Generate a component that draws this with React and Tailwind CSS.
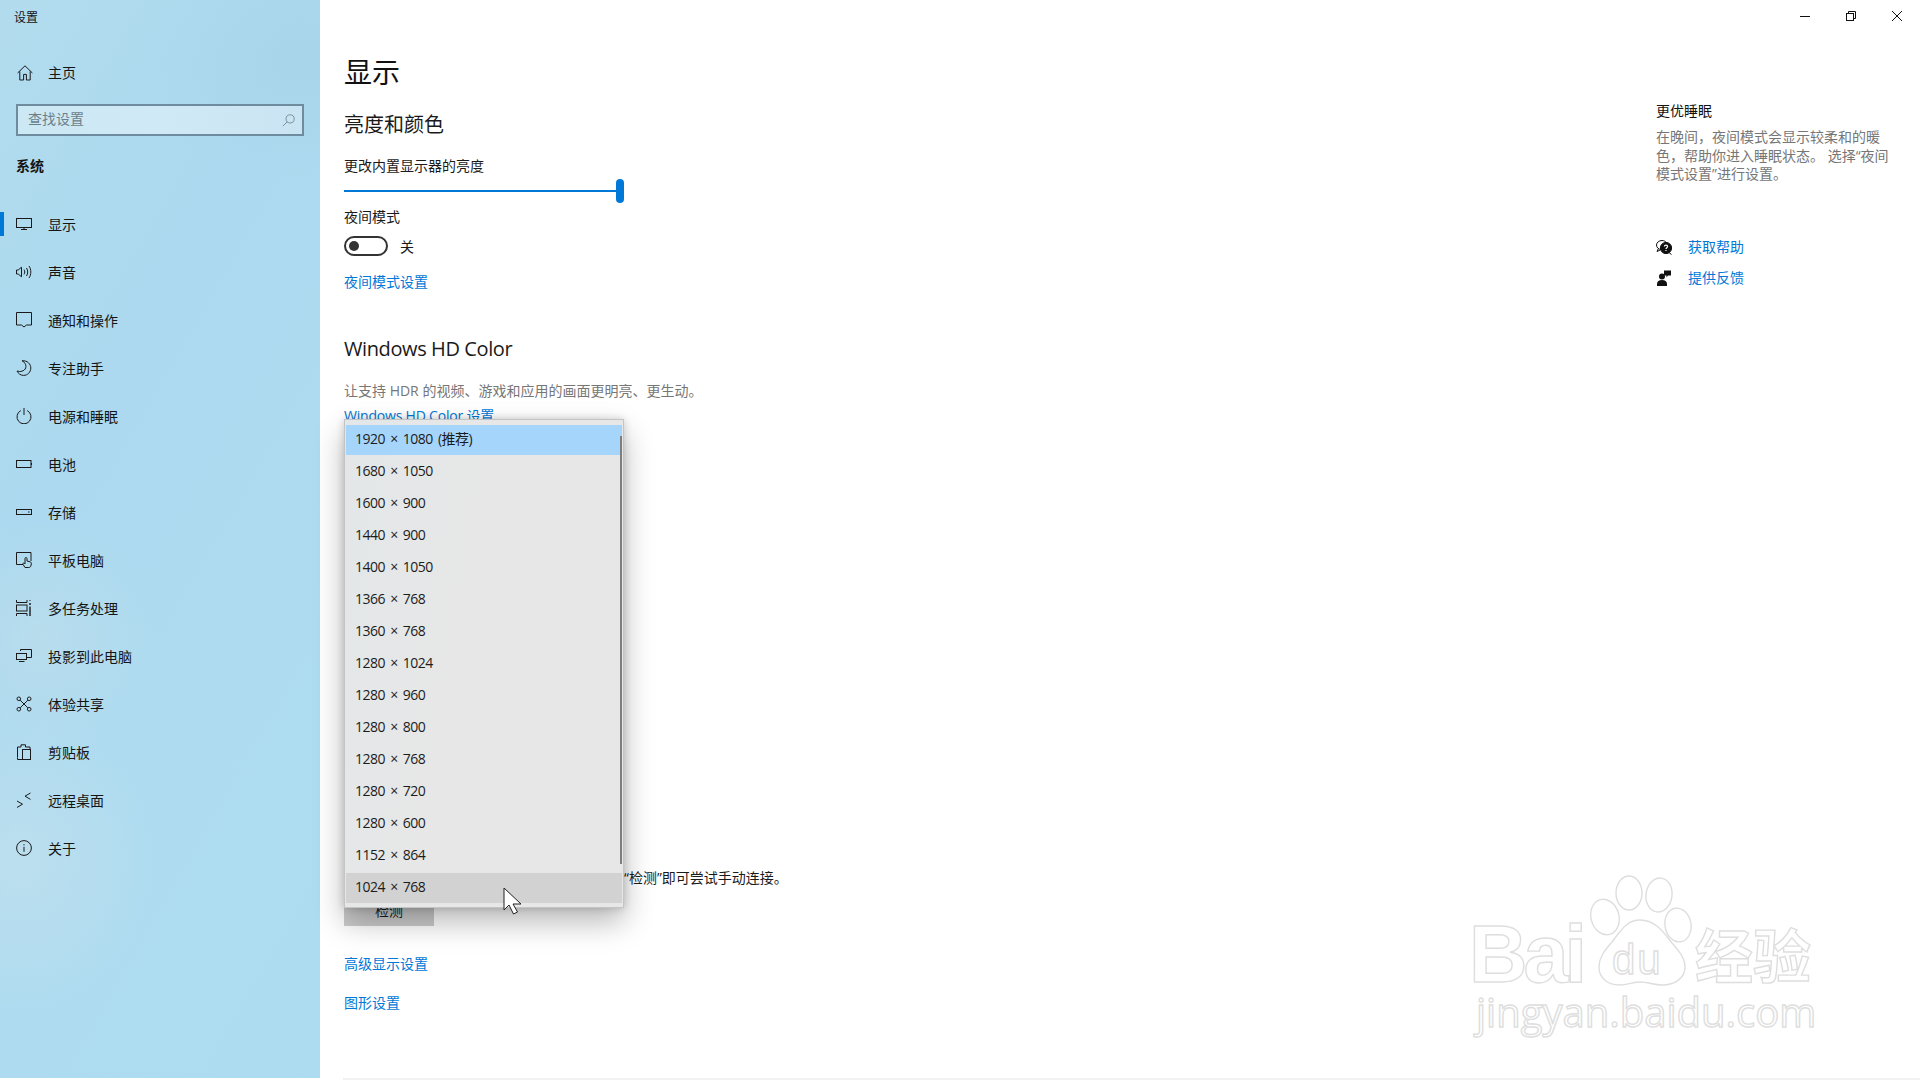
const FONT = '"Open Sans","Noto Sans CJK SC",sans-serif';

const S = ({ children, className = "" }) => (
  <svg viewBox="0 0 16 16" fill="none" stroke="#1a1a1a" strokeWidth="1" className={"w-4 h-4 shrink-0 " + className}>
    {children}
  </svg>
);

const Icons = {
  display: <S><rect x=".5" y="2.500" width="15" height="9" /><path d="M8 11.500v2M5 13.500h6" /></S>,
  sound: (
    <S>
      <path d="M.5 6h1.700L5.500 3.200v9.600L2.200 10H.5z" />
      <path d="M8 5.600c1 1.500 1 3.300 0 4.800M10.500 4c1.600 2.400 1.600 5.600 0 8M13 2c2.400 3.600 2.400 8.400 0 12" />
    </S>
  ),
  notify: <S><path d="M.5.500h15V13h-5L8 15 5.500 13H.5z" /></S>,
  moon: <S><path d="M6 .8c3.200 1.400 5 5 3.200 8.200C8 11 4.400 12.300 1 11c1.300 2.600 3.600 4.400 6.600 4.400 4 0 7.200-3.300 7.200-7.400 0-4-3.600-7.800-8.800-7.200z" /></S>,
  power: <S><path d="M4.800 2.600a7 7 0 1 0 6.400 0M8 0v7" /></S>,
  battery: <S><rect x=".5" y="4.500" width="14.500" height="7" /><path d="M15.500 7v2" /></S>,
  storage: <S><rect x=".5" y="5.500" width="15" height="5" /><path d="M12 8h1.500" /></S>,
  tablet: (
    <S>
      <path d="M7 12.500H.5V.5h14.500V9" />
      <path d="M9 15.500l-2-3.200c-.5-1 .6-1.700 1.300-1L9 12V6.500c0-1.300 2-1.300 2 0V9l3 .8c1 .3 1.500 1 1.300 2.200l-.5 2c-.4 1.200-1 1.500-2 1.500z" />
    </S>
  ),
  multi: (
    <S>
      <path d="M.5 0v2.500H11V0M.5 16v-2.500H11V16" />
      <rect x=".5" y="5" width="10.500" height="6" />
      <path d="M14 6.500V16" strokeWidth="1.400" />
      <circle cx="14" cy="4" r="1" fill="#1a1a1a" stroke="none" />
      <path d="M14 0v1" />
    </S>
  ),
  project: (
    <S>
      <path d="M4.500 3V1.500h11v8H10" />
      <rect x=".5" y="5.500" width="10" height="6" />
      <path d="M3 13.500h5.500" />
    </S>
  ),
  share: (
    <S>
      <circle cx="2.800" cy="2.800" r="1.800" /><circle cx="13.200" cy="2.800" r="1.800" />
      <circle cx="2.800" cy="13.200" r="1.800" /><circle cx="13.200" cy="13.200" r="1.800" />
      <path d="M4.200 4.200l7.600 7.600M11.800 4.200l-7.600 7.600" />
    </S>
  ),
  clip: (
    <S>
      <path d="M1.500 13.500V3H5V.8h4.500V3H14v2" />
      <rect x="6.500" y="5.500" width="8" height="10" />
      <path d="M1.500 13.500v2h5" />
    </S>
  ),
  remote: <S><path d="M1 9l5.500 3.200L1 15.500M14.500 1L9 4.200l5.500 3.200" /></S>,
  about: <S><circle cx="8" cy="8" r="7.400" /><path d="M8 6.800v5M8 4.200v1.200" /></S>,
};

const items = [
  ["显示", "display"], ["声音", "sound"], ["通知和操作", "notify"], ["专注助手", "moon"],
  ["电源和睡眠", "power"], ["电池", "battery"], ["存储", "storage"], ["平板电脑", "tablet"],
  ["多任务处理", "multi"], ["投影到此电脑", "project"], ["体验共享", "share"], ["剪贴板", "clip"],
  ["远程桌面", "remote"], ["关于", "about"],
];

const modes = [
  "1920 × 1080 (推荐)", "1680 × 1050", "1600 × 900", "1440 × 900", "1400 × 1050",
  "1366 × 768", "1360 × 768", "1280 × 1024", "1280 × 960", "1280 × 800",
  "1280 × 768", "1280 × 720", "1280 × 600", "1152 × 864", "1024 × 768",
];

function Sidebar() {
  return (
    <aside className="w-[320px] h-[1078px] shrink-0 flex flex-col text-[14px] text-[#141414] bg-[radial-gradient(ellipse_140px_160px_at_20px_860px,#bcdfee,transparent),radial-gradient(ellipse_120px_120px_at_40px_640px,#b8dded,transparent),radial-gradient(ellipse_160px_120px_at_300px_60px,#a9d5ea,transparent),linear-gradient(120deg,#b2dcee_0%,#acd9ef_35%,#aedbf0_60%,#addcf0_100%)]">
      <div className="h-8 pl-[14px] pt-[3px] flex items-center text-[12px]">设置</div>
      <div className="h-12 mt-[17px] flex items-center">
        <svg viewBox="0 0 16 16" fill="none" stroke="#1a1a1a" className="w-4 h-4 ml-[17px]">
          <path d="M.6 8L8 .8 15.400 8M2.800 6.400v8.600h3.800V9.400h2.800V15h3.800V6.400" />
        </svg>
        <span className="ml-[15px] pb-[2px]">主页</span>
      </div>
      <div className="mt-[7px] mx-4 h-8 border-2 border-[#6f8c9f] bg-[linear-gradient(90deg,#cde8f5,#cfe9f6_50%,#cbe4f3)] flex items-center pl-[10px] pr-[7px] text-[#6b7f8b]">
        <span className="flex-1 pb-[3px]">查找设置</span>
        <svg viewBox="0 0 16 16" fill="none" stroke="#6b7f8b" className="w-[13px] h-[13px]">
          <circle cx="10" cy="6" r="5" /><path d="M6.400 9.600L1 15" />
        </svg>
      </div>
      <div className="h-8 mt-[14px] pl-4 pb-[2px] flex items-center font-bold">系统</div>
      <nav className="mt-[18px] flex flex-col">
        {items.map(([label, key], i) => (
          <div key={label} className="relative h-12 pl-4 flex items-center">
            {i === 0 && <div className="absolute left-0 top-3 h-6 w-1 bg-[#0078d7]" />}
            {Icons[key]}
            <span className="ml-4">{label}</span>
          </div>
        ))}
      </nav>
    </aside>
  );
}

function Main() {
  const link = "text-[#0078d7] leading-5";
  return (
    <main className="flex-1 pl-[24px] pt-[52px] text-[14px] text-[#1a1a1a]">
      <h1 className="text-[28px] leading-10 font-normal text-[#111]">显示</h1>
      <h2 className="mt-[19px] text-[20px] leading-7">亮度和颜色</h2>
      <div className="mt-[17px] leading-5">更改内置显示器的亮度</div>
      <div className="mt-[3px] relative w-[280px] h-6 flex items-center">
        <div className="h-[2px] w-[276px] bg-[#0078d7]" />
        <div className="absolute left-[272px] top-0 w-2 h-6 rounded-full bg-[#0078d7]" />
      </div>
      <div className="mt-1 leading-5">夜间模式</div>
      <div className="mt-[9px] flex items-center h-5">
        <div className="w-11 h-5 rounded-full border-2 border-[#333] flex items-center pl-[3px]">
          <div className="w-[10px] h-[10px] rounded-full bg-[#333]" />
        </div>
        <span className="ml-3">关</span>
      </div>
      <div className={"mt-4 " + link}>夜间模式设置</div>
      <h2 className="mt-[43px] text-[20px] leading-7 tracking-[-0.4px]">Windows HD Color</h2>
      <div className="mt-[18px] leading-5 text-[#767676]">让支持 HDR 的视频、游戏和应用的画面更明亮、更生动。</div>
      <div className={"mt-[5px] tracking-[-0.2px] " + link}>Windows HD Color 设置</div>
      <div className="mt-[442px] leading-5">较旧的显示器可能不会总是能自动连接。选择“检测”即可尝试手动连接。</div>
      <div className="mt-[6px] w-[90px] h-8 bg-[#cccccc] flex items-center justify-center">检测</div>
      <div className={"mt-7 " + link}>高级显示设置</div>
      <div className={"mt-[19px] " + link}>图形设置</div>
    </main>
  );
}

function Aside() {
  return (
    <div className="absolute right-0 top-0 w-[264px] h-[300px] text-[14px]">
      <div className="flex justify-end h-8 items-center gap-[36px] pr-[18px]">
        <svg viewBox="0 0 10 10" stroke="#111" fill="none" className="w-[10px] h-[10px]"><path d="M0 5.500h10" /></svg>
        <svg viewBox="0 0 10 10" stroke="#111" fill="none" className="w-[10px] h-[10px]"><rect x=".5" y="2.500" width="7" height="7" /><path d="M2.500 2.500v-2h7v7h-2" /></svg>
        <svg viewBox="0 0 10 10" stroke="#111" fill="none" className="w-[10px] h-[10px]"><path d="M0 0l10 10M10 0L0 10" /></svg>
      </div>
      <div className="mt-[69px] leading-5 text-[#111]">更优睡眠</div>
      <p className="mt-[7px] leading-[18.5px] text-[#767676] w-[240px]">在晚间，夜间模式会显示较柔和的暖色，帮助你进入睡眠状态。 选择“夜间模式设置”进行设置。</p>
      <div className="mt-[53px] flex items-center h-5">
        <svg viewBox="0 0 16 16" className="w-4 h-4" fill="none" stroke="#111">
          <path d="M5.500 10.500C2.500 10.500.5 8.500.5 6S3 1.500 6 1.500c2 0 3.800 1 4.600 2.400M2.400 9.600L1 12.500l3.400-1.600" />
          <circle cx="10" cy="9" r="5.600" fill="#111" />
          <path d="M13 13.500l2.500 2" />
          <path d="M8.400 7.600c0-2 3.200-2 3.200 0 0 1.200-1.600 1.200-1.600 2.400M10 11v1" stroke="#fff" strokeWidth="1.200" />
        </svg>
        <span className="ml-[16px] text-[#0078d7]">获取帮助</span>
      </div>
      <div className="mt-[11px] flex items-center h-5">
        <svg viewBox="0 0 16 16" className="w-4 h-4" fill="#111">
          <circle cx="6" cy="6.500" r="3" />
          <path d="M1 16v-2c0-2.500 2-4 5-4s5 1.500 5 4v2z" />
          <path d="M8 .5h7v5h-3l-1.500 2V5.500H8z" />
        </svg>
        <span className="ml-[16px] text-[#0078d7]">提供反馈</span>
      </div>
    </div>
  );
}

function Dropdown() {
  return (
    <div className="absolute left-[344px] top-[419px] w-[280px] h-[489px] border border-[#c4c4c4] bg-[linear-gradient(100deg,#e3e7e9,#e7e7e7_40%,#e7e7e7)] shadow-[0_14px_28px_rgba(0,0,0,0.28),0_0_8px_rgba(0,0,0,0.18)] pt-[5px] px-[1px]">
      <div className="flex flex-col gap-[2px]">
        {modes.map((m, i) => (
          <div
            key={m}
            className={
              "h-[30px] pl-[9px] pb-[3px] flex items-center text-[14px] tracking-[-0.5px] [word-spacing:2px] text-[#1c1c1c] " +
              (i === 0 ? "bg-[#a6d5fb]" : i === 14 ? "bg-[#d2d2d2]" : "")
            }
          >
            {m}
          </div>
        ))}
      </div>
      <div className="absolute left-[275px] top-[16px] w-[2px] h-[428px] bg-[#7e7e7e]" />
    </div>
  );
}

function Watermark() {
  const stroke = "text-transparent [-webkit-text-stroke:1.400px_#dedede] whitespace-nowrap absolute leading-none";
  return (
    <div className="absolute left-[1470px] top-[870px] w-[360px] h-[180px] pointer-events-none">
      <span className={stroke + " left-[-1px] top-[44px] text-[81px] font-bold tracking-[-4px]"} style={{ fontFamily: '"Liberation Sans",sans-serif' }}>Bai</span>
      <svg viewBox="0 0 360 180" className="absolute inset-0 w-[360px] h-[180px]" fill="#fff" stroke="#dedede" strokeWidth="1.400">
        <ellipse cx="135" cy="47" rx="14" ry="18" transform="rotate(-15 135 47)" />
        <ellipse cx="159" cy="23" rx="13" ry="17" />
        <ellipse cx="189" cy="25" rx="13" ry="17" transform="rotate(8 189 25)" />
        <ellipse cx="208" cy="55" rx="13" ry="17" transform="rotate(-10 208 55)" />
        <path d="M170 50c-14 0-20 12-28 22-8 9-13 16-13 25 0 12 10 18 20 18 9 0 14-3 21-3 8 0 14 3 22 3 13 0 23-7 23-18 0-9-6-16-13-24-8-10-16-23-32-23z" />
      </svg>
      <span className={stroke + " left-[142px] top-[69px] text-[42px] tracking-[2px]"} style={{ fontFamily: '"Liberation Sans",sans-serif' }}>du</span>
      <span className={stroke + " left-[225px] top-[54px] text-[58px] font-bold"} style={{ fontFamily: '"Noto Sans CJK SC",sans-serif' }}>经验</span>
      <span className={stroke + " left-[6px] top-[122px] text-[40px]"} style={{ fontFamily: '"Open Sans",sans-serif' }}>jingyan.baidu.com</span>
    </div>
  );
}

export default function App() {
  return (
    <div className="relative w-[1920px] h-[1080px] overflow-hidden bg-white flex" style={{ fontFamily: FONT }}>
      <Sidebar />
      <Main />
      <Aside />
      <Watermark />
      <div className="absolute left-[343px] right-0 bottom-0 h-[2px] bg-[#f1f1f1]" />
      <Dropdown />
      <svg viewBox="0 0 20 30" className="absolute left-[503px] top-[887px] w-5 h-[30px]">
        <path d="M1 1v22l5-5 4.500 9 4-2-4.500-8h8z" fill="#fff" stroke="#222" strokeWidth="1" />
      </svg>
    </div>
  );
}
